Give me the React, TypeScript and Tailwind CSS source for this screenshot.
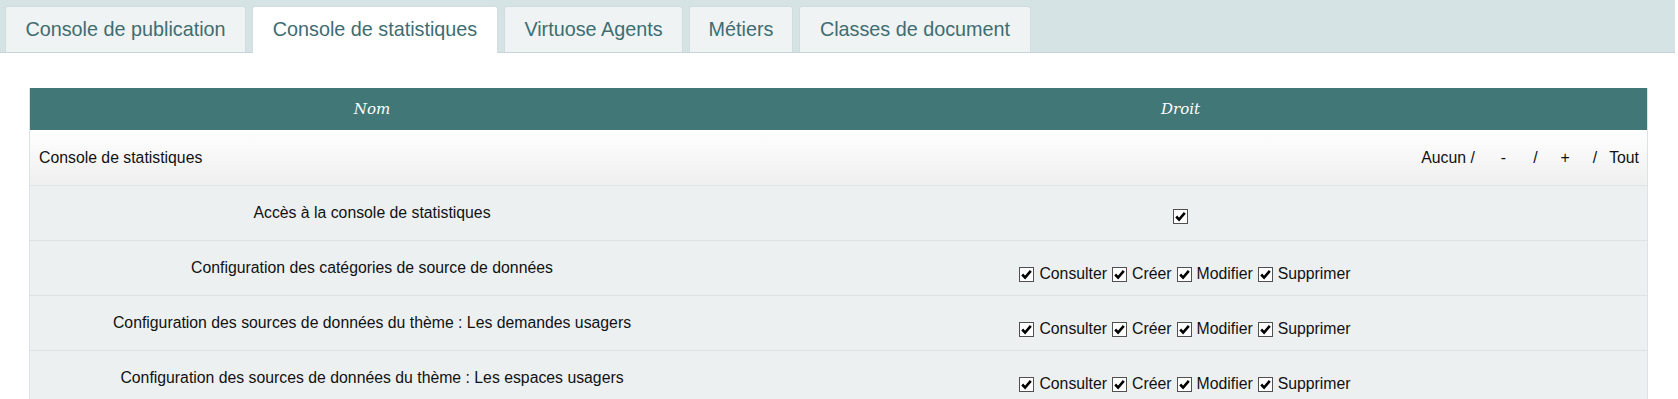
import React from "react";

const tabs = [
  { label: "Console de publication", w: "w-[241px]", active: false },
  { label: "Console de statistiques", w: "w-[246px]", active: true },
  { label: "Virtuose Agents", w: "w-[179px]", active: false },
  { label: "Métiers", w: "w-[104px]", active: false },
  { label: "Classes de document", w: "w-[232px]", active: false },
];

const rows = [
  { name: "Accès à la console de statistiques", single: true },
  { name: "Configuration des catégories de source de données", single: false },
  { name: "Configuration des sources de données du thème : Les demandes usagers", single: false },
  { name: "Configuration des sources de données du thème : Les espaces usagers", single: false },
];

function Box() {
  return (
    <span className="inline-flex h-[15px] w-[15px] shrink-0 items-center justify-center border border-[#505050] bg-white">
      <svg viewBox="0 0 13 13" className="h-[13px] w-[13px]">
        <path d="M2.2 6.5 L5.1 9.6 L10.8 2.9" fill="none" stroke="#000" strokeWidth="2.6" strokeLinejoin="miter" />
      </svg>
    </span>
  );
}

export default function App() {
  return (
    <div className="min-h-[399px] bg-white font-['Liberation_Sans',Arial,sans-serif] text-[15.8px] text-[#111]">
      {/* Tab bar */}
      <div className="mr-[3px] flex h-[53px] items-end gap-[6px] border-b border-[#c6d4d7] bg-[#d6e3e5] pl-[5px]">
        {tabs.map((t) => (
          <div
            key={t.label}
            className={
              t.active
                ? `${t.w} relative -mb-px flex h-[47px] items-center justify-center rounded-t-[3px] border border-b-0 border-[#d2dee0] bg-white pb-px text-[19.8px] text-[#3e6d72]`
                : `${t.w} flex h-[46px] items-center justify-center rounded-t-[3px] border border-b-0 border-[#d0dcde] bg-[#eff3f3] text-[19.8px] text-[#3e6d72]`
            }
          >
            {t.label}
          </div>
        ))}
      </div>

      {/* Table */}
      <div className="ml-[29px] mt-[35px] w-[1619px] border-x border-[#dbe3e4]">
        <div className="grid h-[42px] grid-cols-[684px_1fr] items-center bg-[#427777] font-['DejaVu_Serif',serif] text-[15px] italic text-white">
          <div className="text-center">Nom</div>
          <div className="text-center">Droit</div>
        </div>

        <div className="flex h-[56px] items-center justify-between border-b border-[#dfe4e4] bg-gradient-to-b from-white to-[#efefef] pl-[9px] pr-[8px]">
          <span>Console de statistiques</span>
          <div className="flex items-center">
            <span>Aucun /</span>
            <span className="ml-[26px]">-</span>
            <span className="ml-[27px]">/</span>
            <span className="ml-[23px]">+</span>
            <span className="ml-[23px]">/</span>
            <span className="ml-[12px]">Tout</span>
          </div>
        </div>

        {rows.map((r) => (
          <div
            key={r.name}
            className="grid h-[55px] grid-cols-[684px_1fr] items-center border-b border-[#dde3e3] bg-[#ecf0f1]"
          >
            <div className="text-center">{r.name}</div>
            {r.single ? (
              <div className="flex items-center justify-center pt-[6px]">
                <Box />
              </div>
            ) : (
              <div className="flex items-center justify-center pt-[12px]">
                <div className="flex items-center gap-[5px] pl-[9px]">
                  <Box />
                  <span>Consulter</span>
                  <Box />
                  <span>Créer</span>
                  <Box />
                  <span>Modifier</span>
                  <Box />
                  <span>Supprimer</span>
                </div>
              </div>
            )}
          </div>
        ))}
      </div>
    </div>
  );
}
